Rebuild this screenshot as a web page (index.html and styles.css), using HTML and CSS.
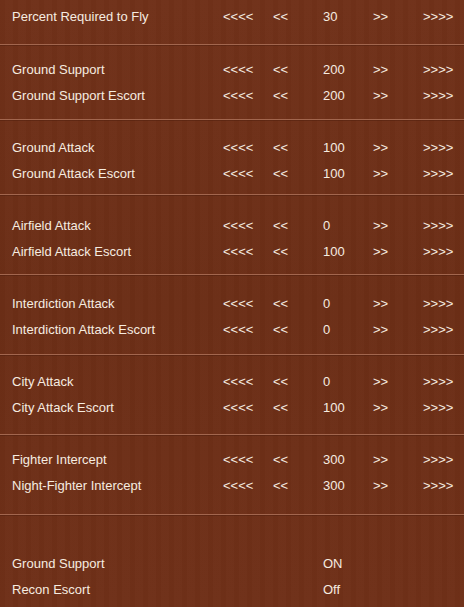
FILE: index.html
```html
<!DOCTYPE html>
<html>
<head>
<meta charset="utf-8">
<link rel="stylesheet" href="styles.css">
</head>
<body>
<div class="panel">
  <section class="group g1">
    <div class="row"><span class="label">Percent Required to Fly</span><span>&lt;&lt;&lt;&lt;</span><span>&lt;&lt;</span><span>30</span><span>&gt;&gt;</span><span>&gt;&gt;&gt;&gt;</span></div>
  </section>
  <section class="group g2">
    <div class="row"><span class="label">Ground Support</span><span>&lt;&lt;&lt;&lt;</span><span>&lt;&lt;</span><span>200</span><span>&gt;&gt;</span><span>&gt;&gt;&gt;&gt;</span></div>
    <div class="row"><span class="label">Ground Support Escort</span><span>&lt;&lt;&lt;&lt;</span><span>&lt;&lt;</span><span>200</span><span>&gt;&gt;</span><span>&gt;&gt;&gt;&gt;</span></div>
  </section>
  <section class="group g3">
    <div class="row"><span class="label">Ground Attack</span><span>&lt;&lt;&lt;&lt;</span><span>&lt;&lt;</span><span>100</span><span>&gt;&gt;</span><span>&gt;&gt;&gt;&gt;</span></div>
    <div class="row"><span class="label">Ground Attack Escort</span><span>&lt;&lt;&lt;&lt;</span><span>&lt;&lt;</span><span>100</span><span>&gt;&gt;</span><span>&gt;&gt;&gt;&gt;</span></div>
  </section>
  <section class="group g4">
    <div class="row"><span class="label">Airfield Attack</span><span>&lt;&lt;&lt;&lt;</span><span>&lt;&lt;</span><span>0</span><span>&gt;&gt;</span><span>&gt;&gt;&gt;&gt;</span></div>
    <div class="row"><span class="label">Airfield Attack Escort</span><span>&lt;&lt;&lt;&lt;</span><span>&lt;&lt;</span><span>100</span><span>&gt;&gt;</span><span>&gt;&gt;&gt;&gt;</span></div>
  </section>
  <section class="group g5">
    <div class="row"><span class="label">Interdiction Attack</span><span>&lt;&lt;&lt;&lt;</span><span>&lt;&lt;</span><span>0</span><span>&gt;&gt;</span><span>&gt;&gt;&gt;&gt;</span></div>
    <div class="row"><span class="label">Interdiction Attack Escort</span><span>&lt;&lt;&lt;&lt;</span><span>&lt;&lt;</span><span>0</span><span>&gt;&gt;</span><span>&gt;&gt;&gt;&gt;</span></div>
  </section>
  <section class="group g6">
    <div class="row"><span class="label">City Attack</span><span>&lt;&lt;&lt;&lt;</span><span>&lt;&lt;</span><span>0</span><span>&gt;&gt;</span><span>&gt;&gt;&gt;&gt;</span></div>
    <div class="row"><span class="label">City Attack Escort</span><span>&lt;&lt;&lt;&lt;</span><span>&lt;&lt;</span><span>100</span><span>&gt;&gt;</span><span>&gt;&gt;&gt;&gt;</span></div>
  </section>
  <section class="group g7">
    <div class="row"><span class="label">Fighter Intercept</span><span>&lt;&lt;&lt;&lt;</span><span>&lt;&lt;</span><span>300</span><span>&gt;&gt;</span><span>&gt;&gt;&gt;&gt;</span></div>
    <div class="row"><span class="label">Night-Fighter Intercept</span><span>&lt;&lt;&lt;&lt;</span><span>&lt;&lt;</span><span>300</span><span>&gt;&gt;</span><span>&gt;&gt;&gt;&gt;</span></div>
  </section>
  <section class="group g8">
    <div class="row"><span class="label">Ground Support</span><span></span><span></span><span>ON</span></div>
    <div class="row"><span class="label">Recon Escort</span><span></span><span></span><span>Off</span></div>
  </section>
</div>
</body>
</html>
```

FILE: styles.css
```css
html, body {
  margin: 0;
  padding: 0;
  background: #6d2f17;
}

.panel {
  width: 464px;
  height: 607px;
  overflow: hidden;
  font-family: "Liberation Sans", Arial, sans-serif;
  font-size: 13px;
  color: #f6ece0;
  background-color: #6e3018;
  background-image:
    repeating-linear-gradient(90deg, rgba(0,0,0,0.012) 0 5px, rgba(255,255,255,0.01) 5px 13px),
    linear-gradient(180deg, #703119 0%, #6b2e16 50%, #6f3018 100%);
}

.group {
  border-top: 1px solid #a2664e;
  box-shadow: inset 0 1px 0 rgba(60, 20, 5, 0.3);
}

.g1 { border-top: none; box-shadow: none; padding: 4px 0 14px; }
.g2 { padding: 12px 0 10px; }
.g3 { padding: 15px 0 7px; }
.g4 { padding: 18px 0 9px; }
.g5 { padding: 16px 0 11px; }
.g6 { padding: 14px 0 13px; }
.g7 { padding: 12px 0 15px; }
.g8 { padding: 36px 0 0; }

.row {
  display: grid;
  grid-template-columns: 211px repeat(5, 50px);
  padding-left: 12px;
  height: 26px;
  line-height: 26px;
  white-space: nowrap;
}
```
